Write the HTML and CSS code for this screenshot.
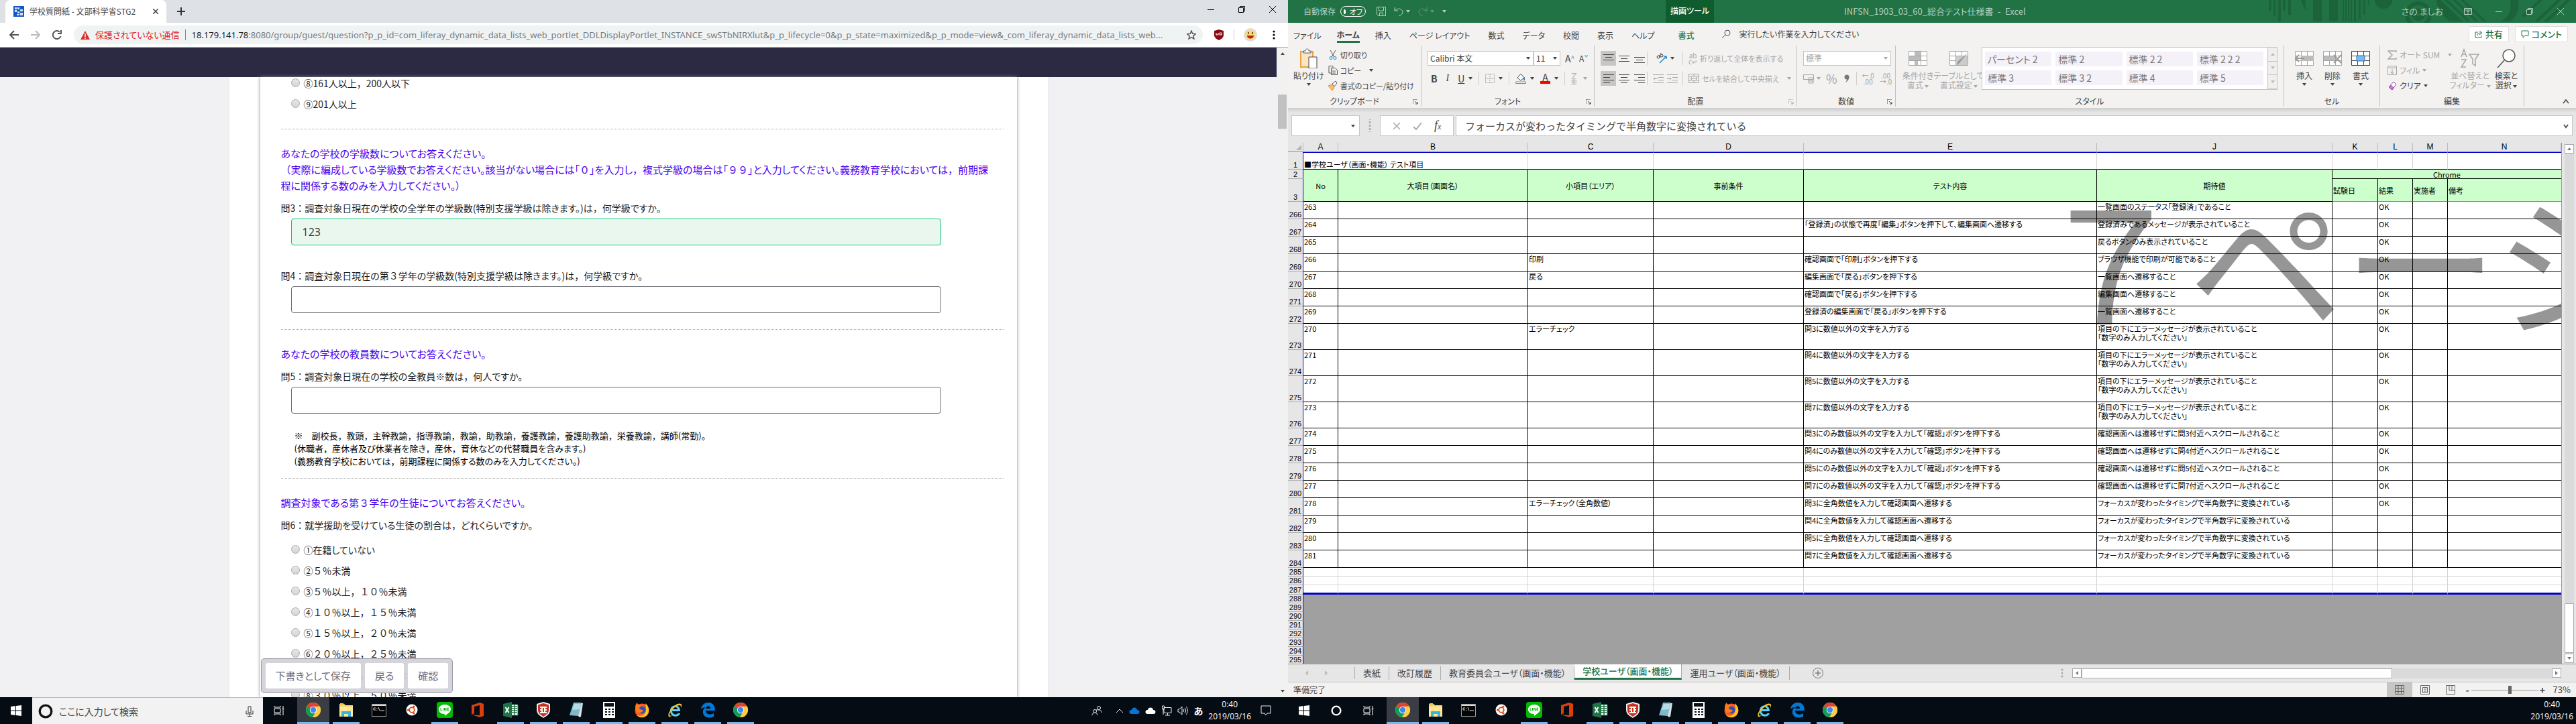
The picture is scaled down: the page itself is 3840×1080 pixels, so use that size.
FILE: index.html
```html
<!DOCTYPE html>
<html lang="ja">
<head>
<meta charset="utf-8">
<title>学校質問紙 - 文部科学省STG2</title>
<link rel="stylesheet" href="styles.css">
</head>
<body>
<svg class="defs" aria-hidden="true">
  <symbol id="i-chrome" viewBox="0 0 24 24"><circle cx="12" cy="12" r="11" fill="#fbc116"/><path d="M12 12L2.5 6.5A11 11 0 0 1 21.5 6.5L12 7z" fill="#db4437"/><path d="M2.5 6.5A11 11 0 0 0 11 23L16 14.5 12 12z" fill="#0f9d58"/><path d="M11 23A11 11 0 0 0 21.8 7H12l4.3 7.5z" fill="#ffcd40"/><circle cx="12" cy="12" r="5.2" fill="#f4f4f4"/><circle cx="12" cy="12" r="4.2" fill="#4285f4"/></symbol>
  <symbol id="i-folder" viewBox="0 0 24 24"><path d="M2 3h7l2 2h11v17H2z" fill="#f5d36b"/><path d="M2 7h20v15H2z" fill="#ffe794"/><path d="M5 22v-8h14v8h-4v-4H9v4z" fill="#3ab1e0"/><path d="M3 2h5v2H3z" fill="#e9b84a"/></symbol>
  <symbol id="i-cmd" viewBox="0 0 24 24"><path d="M1 3h22v19H1z" fill="#9a9a9a"/><path d="M2 6h20v15H2z" fill="#050505"/><path d="M2 4h20v2H2z" fill="#d8d8d8"/><path d="M4 9h3M4 9v3h3M9 9v1M9 12v1M11 8l2 5M14 13h6" stroke="#ddd" fill="none"/></symbol>
  <symbol id="i-ubuntu" viewBox="0 0 24 24"><circle cx="12" cy="12" r="8.5" fill="#fff"/><circle cx="12" cy="12" r="3.8" fill="none" stroke="#dd4814" stroke-width="1.8"/><circle cx="6.5" cy="12" r="1.6" fill="#dd4814"/><circle cx="15" cy="7" r="1.6" fill="#dd4814"/><circle cx="15" cy="17" r="1.6" fill="#dd4814"/></symbol>
  <symbol id="i-line" viewBox="0 0 24 24"><rect width="24" height="24" rx="4" fill="#00b900"/><path d="M12 4c5 0 9 3 9 7 0 5-6 7-9 10 0-2 0-3-1-3-5 0-8-3-8-7s4-7 9-7z" fill="#fff"/><path d="M6 9v4h2M9.500 9v4M11.500 13V9l2.500 4V9M18 9h-2v4h2M16 11h2" fill="none" stroke="#00b900"/></symbol>
  <symbol id="i-office" viewBox="0 0 24 24"><path d="M3 5l12-4 6 2v18l-6 2-12-4 12 1V5L7 7v10l-4 2z" fill="#dc3e0e"/></symbol>
  <symbol id="i-excel" viewBox="0 0 24 24"><path d="M13 4h10v16H13z" fill="#fff" stroke="#217346"/><path d="M14 7h8M14 10h8M14 13h8M14 16h8M18 4v16" stroke="#217346" stroke-width="1.500"/><path d="M1 3l13-3v24L1 21z" fill="#217346"/><path d="M4.500 8l5 8M9.500 8l-5 8" stroke="#fff" stroke-width="2"/></symbol>
  <symbol id="i-shield" viewBox="0 0 24 24"><path d="M12 0l10 3v9c0 6-5 9-10 12C7 21 2 18 2 12V3z" fill="#eee"/><path d="M12 2l8 2.500V12c0 5-4 7.500-8 10-4-2.500-8-5-8-10V4.500z" fill="#c8321e"/><path d="M7 8h10M7 12h10M7 16h10M10 7v10M14 7v10" stroke="#fff" stroke-width="2"/><path d="M11 10.500h2v3h-2z" fill="#c8321e"/></symbol>
  <symbol id="i-note" viewBox="0 0 24 24"><path d="M8 2h14l-3 20-3 1z" fill="#d8e0e2"/><path d="M8 1h12l-5 20-13-1z" fill="#7fb9c9"/><path d="M9 3h10l-2 8-11 1z" fill="#b4dce6"/></symbol>
  <symbol id="i-calc" viewBox="0 0 24 24"><path d="M3 0h18v24H3z" fill="#fff"/><path d="M5 2h14v5H5z" fill="#0a0d14"/><path d="M6 11h3M11 11h3M16 11h3M6 15h3M11 15h3M16 15h3M6 19h3M11 19h3M16 19h3" stroke="#0a0d14" stroke-width="2"/></symbol>
  <symbol id="i-firefox" viewBox="0 0 24 24"><circle cx="12" cy="13" r="10.500" fill="#ff5a1f"/><path d="M17 2c6 5 7 13 2 18-5 4-12 3-15 0 6 2 11 0 13-4s1-9 0-14z" fill="#ffc425"/><circle cx="12" cy="12" r="5.500" fill="#2b50b8"/><path d="M2 8c0-3 1-5 3-7 0 3 3 3 6 5-2 1-4 3-2 5 2 0 3 2 5 1-1 4-5 5-8 4-2-2-4-4-4-8z" fill="#ff7a1a"/></symbol>
  <symbol id="i-ie" viewBox="0 0 24 24"><path d="M20 14H8c0 5 7 6 8.500 3h3.500c-2 7-15 7-15-4 0-10 15-11 15 1zM8 11h8c0-4-7-4-8 0z" fill="#5fd0f5"/><path d="M3 22C-1 17 14-1 21 3c2 1 1 4 0 6 0-3 0-4-2-4C13 5 5 14 4 19c0 2 2 2 4 1-2 2-4 3-5 2z" fill="#f2c12e"/></symbol>
  <symbol id="i-edge" viewBox="0 0 24 24"><path d="M2 11C3 4 8 1 13 1c6 0 10 4 10 12H9c0 6 7 7 12 4v5C12 26 4 22 5 14c0-3 2-5 4-6-5 0-7 3-7 3zM9 10h7c0-5-6-5-7 0z" fill="#0078d7"/></symbol>
  <symbol id="i-win" viewBox="0 0 16 16"><path d="M0 2l7-1v6.500H0zM8 1l8-1v7.500H8zM0 8.500h7V15l-7-1zM8 8.500h8V16l-8-1z" fill="#fff"/></symbol>
  <symbol id="i-ring" viewBox="0 0 20 20"><circle cx="10" cy="10" r="8" fill="none" stroke="currentColor" stroke-width="3"/></symbol>
  <symbol id="i-task" viewBox="0 0 16 16"><path d="M1 1v2h9V1M1 15v-2h9v2M1 5h9v6H1zM14 1v3M14 7v8M13 5h2v1h-2z" fill="none" stroke="#fff"/></symbol>
  <symbol id="i-car" viewBox="0 0 6 4"><path d="M0 0h6L3 4z" fill="currentColor"/></symbol>
  <symbol id="i-launch" viewBox="0 0 8 8"><path d="M0 7V0h7M3 3l4 4M7 4v3H4" fill="none" stroke="currentColor"/></symbol>
  <symbol id="i-min" viewBox="0 0 10 10"><path d="M0 5.500h10" stroke="currentColor"/></symbol>
  <symbol id="i-restore" viewBox="0 0 10 10"><path d="M.5 2.500h7v7h-7zM2.500 2V.5h7v7H8" fill="none" stroke="currentColor"/></symbol>
  <symbol id="i-x" viewBox="0 0 10 10"><path d="M0 0l10 10M10 0L0 10" stroke="currentColor"/></symbol>
  <symbol id="i-grid" viewBox="0 0 28 22"><path d="M.5.5h27v21H.5z" fill="#fff" stroke="currentColor"/><path d="M9.500 0v22M18.500 0v22M0 7.500h28M0 14.500h28" stroke="currentColor"/></symbol>
  <symbol id="i-al" viewBox="0 0 16 14"><path d="M0 1.500h16M0 5.500h10M0 9.500h16M0 13.500h10" stroke="currentColor"/></symbol>
  <symbol id="i-ac" viewBox="0 0 16 14"><path d="M0 1.500h16M3 5.500h10M0 9.500h16M3 13.500h10" stroke="currentColor"/></symbol>
  <symbol id="i-ar" viewBox="0 0 16 14"><path d="M0 1.500h16M6 5.500h10M0 9.500h16M6 13.500h10" stroke="currentColor"/></symbol>
  <symbol id="i-vt" viewBox="0 0 16 14"><path d="M0 1.500h16M3 5.500h10M0 9.500h16" stroke="currentColor"/></symbol>
  <symbol id="i-vm" viewBox="0 0 16 14"><path d="M0 3.500h16M3 7.500h10M0 11.500h16" stroke="currentColor"/></symbol>
  <symbol id="i-vb" viewBox="0 0 16 14"><path d="M0 5.500h16M3 9.500h10M0 13.500h16" stroke="currentColor"/></symbol>
  <symbol id="i-ind" viewBox="0 0 16 14"><path d="M0 1.500h16M8 5.500h8M8 9.500h8M0 13.500h16M1 7.500h6M3 5.500l-2 2 2 2" fill="none" stroke="currentColor"/></symbol>
  <symbol id="i-inr" viewBox="0 0 16 14"><path d="M0 1.500h16M8 5.500h8M8 9.500h8M0 13.500h16M0 7.500h6M4 5.500l2 2-2 2" fill="none" stroke="currentColor"/></symbol>
</svg>

<div class="desktop">
<section class="screen">
  <div class="tabstrip">
    <div class="tab">
      <svg class="s16" viewBox="0 0 16 16"><path fill="#1357c4" d="M0 0h16v16H0z"/><path d="M2 2h3v3H2zM6 2h3v3H6zM2 6h3v3H2zM6 8h3v3H6zM10 5h4v3h-4zM10 10h4v4h-4zM5 12h4v2H5z" fill="#cfe0fb"/></svg>
      <span class="tab-title">学校質問紙 - 文部科学省STG2</span>
      <button class="plain" aria-label="タブを閉じる"><svg class="s8" viewBox="0 0 8 8"><path d="M0 0l8 8M8 0L0 8" stroke="#444" stroke-width="1.500"/></svg></button>
    </div>
    <button class="plain newtab" aria-label="新しいタブ"><svg class="s12" viewBox="0 0 12 12"><path d="M6 0v12M0 6h12" stroke="#333" stroke-width="2"/></svg></button>
    <div class="winbtns dark">
      <button class="plain" aria-label="最小化"><svg class="s10"><use href="#i-min"/></svg></button>
      <button class="plain" aria-label="元に戻す"><svg class="s10"><use href="#i-restore"/></svg></button>
      <button class="plain" aria-label="閉じる"><svg class="s10"><use href="#i-x"/></svg></button>
    </div>
  </div>
  <div class="toolbar">
    <button class="plain" aria-label="戻る"><svg class="s14" viewBox="0 0 14 14"><path d="M14 7H1M7 1L1 7l6 6" fill="none" stroke="#555" stroke-width="2"/></svg></button>
    <button class="plain" aria-label="進む"><svg class="s14" viewBox="0 0 14 14"><path d="M0 7h13M7 1l6 6-6 6" fill="none" stroke="#bbb" stroke-width="2"/></svg></button>
    <button class="plain" aria-label="再読み込み"><svg class="s14" viewBox="0 0 14 14"><path d="M12.500 9A6 6 0 1 1 11 2.800M13 0v5H8" fill="none" stroke="#555" stroke-width="2"/></svg></button>
    <div class="omnibox">
      <svg class="s14" viewBox="0 0 14 14"><path d="M7 1l7 13H0z" fill="#d93025"/><path d="M7 5v5M7 11v2" stroke="#fff" stroke-width="1.500"/></svg>
      <span class="insecure">保護されていない通信</span>
      <span class="url"><b>18.179.141.78</b>:8080/group/guest/question?p_p_id=com_liferay_dynamic_data_lists_web_portlet_DDLDisplayPortlet_INSTANCE_swSTbNIRXlut&amp;p_p_lifecycle=0&amp;p_p_state=maximized&amp;p_p_mode=view&amp;_com_liferay_dynamic_data_lists_web...</span>
      <button class="plain" aria-label="ブックマーク"><svg class="s14" viewBox="0 0 14 14"><path d="M7 1l1.800 4.200 4.500.4-3.400 3 1 4.400L7 10.700 3.100 13l1-4.400-3.400-3 4.500-.4z" fill="none" stroke="#555" stroke-width="1.500"/></svg></button>
    </div>
    <svg class="s16" viewBox="0 0 16 16"><path d="M8 0l7 2v6c0 4-3 6-7 8-4-2-7-4-7-8V2z" fill="#8c0a12"/><path d="M4 5v3h3V5M9 5h3v3H9z" fill="none" stroke="#fff"/></svg>
    <span class="vline"></span>
    <svg class="s20" viewBox="0 0 20 20"><circle cx="10" cy="10" r="10" fill="#ddd"/><circle cx="10" cy="10" r="7" fill="#fbd971"/><path d="M5 11h10c0 6-10 6-10 0z" fill="#c0231c"/><path d="M7 6v3M13 6v3" stroke="#5b3b12" stroke-width="1.500"/></svg>
    <button class="plain" aria-label="メニュー"><svg class="s14" viewBox="0 0 14 14"><circle cx="7" cy="2" r="1.600"/><circle cx="7" cy="7" r="1.600"/><circle cx="7" cy="12" r="1.600"/></svg></button>
  </div>

  <div class="browser">
    <div class="page">
      <header class="site-head"></header>
      <main class="column">
        <form class="panel">
          <div class="options first">
            <label><input type="radio" name="q2"><span>⑧161人以上<span class="w">，</span>200人以下</span></label>
            <label><input type="radio" name="q2">⑨201人以上</label>
          </div>
          <section class="block">
            <h2>あなたの学校の学級数についてお答えください。<br><span class="w">（</span>実際に編成している学級数でお答えください。該当がない場合には「<span class="w">０</span>」を入力し<span class="w">，</span>複式学級の場合は「<span class="w">９９</span>」と入力してください。義務教育学校においては<span class="w">，</span>前期課<br>程に関係する数のみを入力してください。）</h2>
            <label class="q" for="q3">問3<span class="w">：</span>調査対象日現在の学校の全学年の学級数(特別支援学級は除きます。)は<span class="w">，</span>何学級ですか。</label>
            <input class="field ok" id="q3" type="text" value="123">
            <label class="q next" for="q4">問4<span class="w">：</span>調査対象日現在の第<span class="w">３</span>学年の学級数(特別支援学級は除きます。)は<span class="w">，</span>何学級ですか。</label>
            <input class="field" id="q4" type="text">
          </section>
          <section class="block">
            <h2>あなたの学校の教員数についてお答えください。</h2>
            <label class="q" for="q5">問5<span class="w">：</span>調査対象日現在の学校の全教員※数は<span class="w">，</span>何人ですか。</label>
            <input class="field" id="q5" type="text">
            <p class="notes">※　副校長<span class="w">，</span>教頭<span class="w">，</span>主幹教諭<span class="w">，</span>指導教諭<span class="w">，</span>教諭<span class="w">，</span>助教諭<span class="w">，</span>養護教諭<span class="w">，</span>養護助教諭<span class="w">，</span>栄養教諭<span class="w">，</span>講師(常勤)。<br>(休職者<span class="w">，</span>産休者及び休業者を除き<span class="w">，</span>産休<span class="w">，</span>育休などの代替職員を含みます。)<br>(義務教育学校においては<span class="w">，</span>前期課程に関係する数のみを入力してください。)</p>
          </section>
          <section class="block">
            <h2>調査対象である第<span class="w">３</span>学年の生徒についてお答えください。</h2>
            <p class="q">問6<span class="w">：</span>就学援助を受けている生徒の割合は<span class="w">，</span>どれくらいですか。</p>
            <div class="options">
              <label><input type="radio" name="q6">①在籍していない</label>
              <label class="w"><input type="radio" name="q6">②５％未満</label>
              <label class="w"><input type="radio" name="q6">③５％以上，１０％未満</label>
              <label class="w"><input type="radio" name="q6">④１０％以上，１５％未満</label>
              <label class="w"><input type="radio" name="q6">⑤１５％以上，２０％未満</label>
              <label class="w"><input type="radio" name="q6">⑥２０％以上，２５％未満</label>
              <label class="w"><input type="radio" name="q6">⑦２５％以上，３０％未満</label>
              <label class="w"><input type="radio" name="q6">⑧３０％以上，５０％未満</label>
            </div>
          </section>
          <div class="actions">
            <button type="button">下書きとして保存</button><button type="button">戻る</button><button type="button">確認</button>
          </div>
        </form>
      </main>
    </div>
    <div class="scroll"><svg class="car"><use href="#i-car"/></svg><i></i><svg class="car"><use href="#i-car"/></svg></div>
  </div>

  <nav class="taskbar">
    <button class="t"><svg class="s16"><use href="#i-win"/></svg></button>
    <label class="search"><svg class="s22"><use href="#i-ring"/></svg><input type="text" placeholder="ここに入力して検索" aria-label="検索"><svg class="mic" viewBox="0 0 12 16"><path d="M4 1h4v9H4zM1 7v5h10V7M6 12v4M3 15.500h6" fill="none" stroke="#333"/></svg></label>
    <button class="t"><svg class="s16"><use href="#i-task"/></svg></button>
    <div class="apps">
      <button class="app on active"><svg><use href="#i-chrome"/></svg></button>
      <button class="app on"><svg><use href="#i-folder"/></svg></button>
      <button class="app"><svg><use href="#i-cmd"/></svg></button>
      <button class="app"><svg><use href="#i-ubuntu"/></svg></button>
      <button class="app on"><svg><use href="#i-line"/></svg></button>
      <button class="app"><svg><use href="#i-office"/></svg></button>
      <button class="app on"><svg><use href="#i-excel"/></svg></button>
      <button class="app on"><svg><use href="#i-shield"/></svg></button>
      <button class="app on"><svg><use href="#i-note"/></svg></button>
      <button class="app on"><svg><use href="#i-calc"/></svg></button>
      <button class="app on"><svg><use href="#i-firefox"/></svg></button>
      <button class="app on"><svg><use href="#i-ie"/></svg></button>
      <button class="app on"><svg><use href="#i-edge"/></svg></button>
      <button class="app on"><svg><use href="#i-chrome"/></svg></button>
    </div>
    <div class="tray">
      <svg class="s16 people" viewBox="0 0 16 16"><circle cx="11" cy="4" r="2.500"/><circle cx="5" cy="9" r="2.500"/><path d="M7 7c3 0 8-1 8 4M1 15c0-5 8-5 8 0"/></svg>
      <svg class="s12" viewBox="0 0 12 12"><path d="M1 9l5-5 5 5"/></svg>
      <svg class="s16" viewBox="0 0 16 16"><path d="M1 12c-2-5 3-5 3-5 1-5 8-4 8 0 5 0 4 6 1 6H3z" fill="#0a74d6" stroke="none"/></svg>
      <svg class="s16" viewBox="0 0 16 16"><path d="M1 12c-2-5 3-5 3-5 1-5 8-4 8 0 5 0 4 6 1 6H3z" fill="#fff" stroke="none"/></svg>
      <svg class="s16" viewBox="0 0 16 16"><path d="M4 3.500h11v8H4zM9.500 12v3M6 15h7M1.500 1v5h3V1zM3 6v8"/></svg>
      <svg class="s16" viewBox="0 0 16 16"><path d="M1 6h2l4-4v12l-4-4H1zM9 6c1 1 1 3 0 4M11 4c2 2 2 6 0 8M13 2c3 3 3 9 0 12"/></svg>
      <span class="ime">あ</span>
      <span class="clock">0:40<br>2019/03/16</span>
      <svg class="s16 bell" viewBox="0 0 16 16"><path d="M1 1h14v11h-5l-2 3-2-3H1z"/></svg>
    </div>
  </nav>
</section>

<section class="screen excel">
  <header class="titlebar">
    <svg class="deco" viewBox="0 0 460 34" preserveAspectRatio="xMaxYMid slice"><g fill="#1c623b"><path d="M2 0h4v16H2zM9 0h3v24H9zM16 0h4v32h-4zM23 0h4v16h-4zM31 0h4v22h-4zM50 0h7v15q-5-6-7-15zM68 0h13v32H68zM92 0h13v32H92zM112 0h2v32h-2zM116 0h2v32h-2zM120 0h2v32h-2zM124 0h2v32h-2zM129 0h3v32h-3zM136 0h3v29h-3zM143 0h3v22h-3zM150 0h2v8h-2z"/><circle cx="173" cy="0" r="13"/><path d="M252 0h6l34 32h-20q-20-16-20-32zM264 0h5l34 32h-5zM276 0h5l34 32h-5zM288 0h5l34 32h-5zM348 32q18-10 14-32h12q2 22-12 32zM380 22L405 0h5l-28 27zM398 32L432 0h6l-34 32zM412 32L446 0h6l-34 32z"/></g><g fill="none" stroke="#1c623b"><circle cx="225" cy="22" r="17" stroke-width="6"/><circle cx="225" cy="22" r="6" stroke-width="7"/></g></svg>
    <div class="qat">
      <span>自動保存</span><button class="toggle"><i></i>オフ</button>
      <button class="plain" aria-label="上書き保存"><svg class="s14" viewBox="0 0 14 14"><path d="M.5.500h13v13H3l-2.500-2zM3.500 1v5h7V1M4.500 13V9h5v4"/></svg></button>
      <button class="plain" aria-label="元に戻す"><svg class="s14" viewBox="0 0 14 14"><path d="M1 1v5h5M1 6c4-5 12-3 12 2 0 3-3 5-6 6"/></svg><svg class="car"><use href="#i-car"/></svg></button>
      <button class="plain dim" aria-label="やり直し"><svg class="s14" viewBox="0 0 14 14"><path d="M13 1v5H8M13 6C9 1 1 3 1 8c0 3 3 5 6 6"/></svg><svg class="car"><use href="#i-car"/></svg></button>
      <svg class="car"><use href="#i-car"/></svg>
    </div>
    <strong class="ctx">描画ツール</strong>
    <span class="book">INFSN_1903_03_60_総合テスト仕様書&ensp;-&ensp;Excel</span>
    <span class="user">さの ましお</span>
    <div class="winbtns">
      <button class="plain" aria-label="リボンの表示"><svg class="s12" viewBox="0 0 12 12"><path d="M.5 1.500h11v9H.5zM0 4h12M6 10V5M4 7l2-2 2 2"/></svg></button>
      <button class="plain" aria-label="最小化"><svg class="s10"><use href="#i-min"/></svg></button>
      <button class="plain" aria-label="元に戻す"><svg class="s10"><use href="#i-restore"/></svg></button>
      <button class="plain" aria-label="閉じる"><svg class="s10"><use href="#i-x"/></svg></button>
    </div>
  </header>

  <nav class="menu">
    <button>ファイル</button><button class="cur">ホーム</button><button>挿入</button><button class="wide">ページ レイアウト</button><button>数式</button><button>データ</button><button>校閲</button><button>表示</button><button>ヘルプ</button><button class="fmt">書式</button>
    <label class="tell"><svg class="s14" viewBox="0 0 14 14"><circle cx="9" cy="5" r="4" fill="none" stroke="#555"/><path d="M6 8l-5 5" stroke="#555"/></svg><input type="text" placeholder="実行したい作業を入力してください" aria-label="操作アシスト"></label>
    <button class="card"><svg class="s12" viewBox="0 0 12 12"><path d="M5 3H1v8h9V8M4 8c0-3 2-4 5-4M7 1l4 3-4 3"/></svg>共有</button>
    <button class="card cm"><svg class="s12" viewBox="0 0 12 12"><path d="M1 1h10v7H6l-3 3V8H1z"/></svg>コメント</button>
  </nav>

  <div class="ribbon">
    <section class="grp clip">
      <div class="body">
        <button class="big"><svg class="pic" viewBox="0 0 28 30"><path d="M2 5h18v23H2z" fill="#fbe6c4" stroke="#e8a33d" stroke-width="2"/><path d="M6 7V4h3c0-4 5-4 5 0h3v3z" fill="#fff" stroke="#555"/><path d="M14 13h12v17H14z" fill="#fff" stroke="#444"/></svg>貼り付け<svg class="car"><use href="#i-car"/></svg></button>
        <div class="stack">
          <button><svg class="s14" viewBox="0 0 14 14"><path d="M3 0l6 10M11 0L5 10" stroke="#555"/><circle cx="4" cy="11.500" r="2" fill="none" stroke="#1e88c7"/><circle cx="10" cy="11.500" r="2" fill="none" stroke="#1e88c7"/></svg>切り取り</button>
          <button><svg class="s14" viewBox="0 0 14 14"><path d="M4 11H1V.5h6V3M4.500 3.500h6l3 3v7h-9zM6 8h5M6 11h5" fill="none" stroke="#555"/></svg>コピー<svg class="car sp"><use href="#i-car"/></svg></button>
          <button><svg class="s14" viewBox="0 0 14 14"><path d="M0 7l5-2 4 5-3 4z" fill="#f8c169" stroke="#e08a2c"/><path d="M6 4l5-4 2 3-4 5z" fill="#fff" stroke="#555"/></svg>書式のコピー/貼り付け</button>
        </div>
      </div>
      <footer>クリップボード<svg class="s8"><use href="#i-launch"/></svg></footer>
    </section>

    <section class="grp font">
      <div class="body rows">
        <div class="line">
          <span class="pick f1"><select aria-label="フォント"><option>Calibri 本文</option></select><svg class="car"><use href="#i-car"/></svg></span><span class="pick f2"><select aria-label="サイズ"><option>11</option></select><svg class="car"><use href="#i-car"/></svg></span>
          <button class="gl">A<sup>^</sup></button><button class="gl sm">A<sup>ˇ</sup></button>
        </div>
        <div class="line fx">
          <button><b>B</b></button><button><i class="ser">I</i></button><button><u>U</u><svg class="car"><use href="#i-car"/></svg></button><span class="vsep"></span>
          <button><svg class="s14 off" viewBox="0 0 14 14"><path d="M.5.500h13v13H.5zM7 0v14M0 7h14" fill="none" stroke="currentColor" stroke-dasharray="2 1"/></svg><svg class="car"><use href="#i-car"/></svg></button><span class="vsep"></span>
          <button><svg class="s16" viewBox="0 0 16 16"><path d="M3 7l5-6 5 6-5 4z" fill="#fff" stroke="#444"/><path d="M13 6v5" stroke="#1e88c7" stroke-width="2"/><path d="M.5 13h15v2.500H.5z" fill="#fff" stroke="#888"/></svg><svg class="car"><use href="#i-car"/></svg></button>
          <button class="fc"><span>A</span><svg class="car"><use href="#i-car"/></svg></button><span class="vsep"></span>
          <button class="off ruby">ア<br>亜</button><svg class="car off"><use href="#i-car"/></svg>
        </div>
      </div>
      <footer>フォント<svg class="s8"><use href="#i-launch"/></svg></footer>
    </section>

    <section class="grp align">
      <div class="body rows">
        <div class="line">
          <button class="sq sel"><svg class="ln"><use href="#i-vt"/></svg></button><button class="sq"><svg class="ln"><use href="#i-vm"/></svg></button><button class="sq"><svg class="ln"><use href="#i-vb"/></svg></button><span class="vsep"></span>
          <button class="or"><svg class="s16" viewBox="0 0 16 16"><path d="M5 15L15 5M15 5h-4M15 5v4" fill="none" stroke="#1e88c7" stroke-width="1.500"/><circle cx="3" cy="6" r="2" fill="none" stroke="#444"/><circle cx="8" cy="4" r="2" fill="none" stroke="#444"/><path d="M4 3l2 4M6 0l2 3" stroke="#444"/></svg><svg class="car"><use href="#i-car"/></svg></button><span class="vsep"></span>
          <button class="off lab"><span class="tiny">ab<br>c↵</span>折り返して全体を表示する</button>
        </div>
        <div class="line">
          <button class="sq sel"><svg class="ln"><use href="#i-al"/></svg></button><button class="sq"><svg class="ln"><use href="#i-ac"/></svg></button><button class="sq"><svg class="ln"><use href="#i-ar"/></svg></button><span class="vsep"></span>
          <button class="or off"><svg class="ln"><use href="#i-ind"/></svg><svg class="ln"><use href="#i-inr"/></svg></button><span class="vsep"></span>
          <button class="off lab"><svg class="ln" viewBox="0 0 16 14"><path d="M.5.500h15v13H.5zM0 4h16M0 10h16M8 0v4M8 10v4M3 7h10M5 5L3 7l2 2M11 5l2 2-2 2" fill="none" stroke="currentColor"/></svg>セルを結合して中央揃え<svg class="car sp"><use href="#i-car"/></svg></button>
        </div>
      </div>
      <footer>配置<svg class="s8 off"><use href="#i-launch"/></svg></footer>
    </section>

    <section class="grp num off">
      <div class="body rows">
        <div class="line"><span class="pick f3"><select aria-label="表示形式"><option>標準</option></select><svg class="car"><use href="#i-car"/></svg></span></div>
        <div class="line nf">
          <button><svg class="s16" viewBox="0 0 16 16"><path d="M.5 2.500h15v7H.5zM8 7h7v8H8zM8 10h7M8 12h7" fill="#f3f2f1" stroke="currentColor"/></svg><svg class="car"><use href="#i-car"/></svg></button><button class="big1">%</button><button class="big1" aria-label="桁区切り"><svg class="s12" viewBox="0 0 12 12"><circle cx="6" cy="4" r="3.500" fill="#777"/><path d="M9 3q1 6-5 9 3-4 2-7z" fill="#777"/></svg></button><span class="vsep"></span><button class="tiny">←.0<br>.00</button><button class="tiny">.00<br>→.0</button>
        </div>
      </div>
      <footer>数値<svg class="s8"><use href="#i-launch"/></svg></footer>
    </section>

    <section class="grp styles">
      <div class="body">
        <button class="big off c1"><svg class="gr" viewBox="0 0 28 22"><use href="#i-grid"/><path d="M9 1h10v6H9zM1 8h17v6H1zM9 15h5v6H9z" fill="#bbb"/></svg><span>条件付き<br>書式 <svg class="car"><use href="#i-car"/></svg></span></button>
        <button class="big off c2"><svg class="gr" viewBox="0 0 28 22"><use href="#i-grid"/><path d="M10 8h17v13H10z" fill="#ccc"/><path d="M27 3L15 18l-4 4 1-6z" fill="#999"/></svg><span>テーブルとして<br>書式設定 <svg class="car"><use href="#i-car"/></svg></span></button>
        <div class="gallery">
          <button>パーセント 2</button><button>標準 2</button><button>標準 2 2</button><button>標準 2 2 2</button>
          <button>標準 3</button><button>標準 3 2</button><button>標準 4</button><button>標準 5</button>
          <div class="gscroll"><span><svg class="car up"><use href="#i-car"/></svg></span><span><svg class="car"><use href="#i-car"/></svg></span><span><svg class="car"><use href="#i-car"/></svg></span></div>
        </div>
      </div>
      <footer>スタイル</footer>
    </section>

    <section class="grp cells">
      <div class="body">
        <button class="big"><svg class="gr off" viewBox="0 0 28 22"><use href="#i-grid"/><path d="M9 7h19v8H9z" fill="#bbb"/><path d="M14 11H1M6 6l-5 5 5 5" fill="none" stroke="#999" stroke-width="2"/></svg>挿入<svg class="car"><use href="#i-car"/></svg></button>
        <button class="big"><svg class="gr off" viewBox="0 0 28 22"><use href="#i-grid"/><path d="M1 8h17v6H1z" fill="#bbb"/><path d="M16 6l11 12M27 6L16 18" stroke="#999" stroke-width="2"/></svg>削除<svg class="car"><use href="#i-car"/></svg></button>
        <button class="big"><svg class="gr" viewBox="0 0 28 22"><use href="#i-grid"/><path d="M8 7h12v8H8z" fill="#7fb8ea" stroke="#1e6fb8"/></svg>書式<svg class="car"><use href="#i-car"/></svg></button>
      </div>
      <footer>セル</footer>
    </section>

    <section class="grp edit">
      <div class="body">
        <div class="stack">
          <button class="off"><svg class="s14" viewBox="0 0 14 14"><path d="M13 3V1H1l6 6-6 6h12v-2" fill="none" stroke="currentColor" stroke-width="1.500"/></svg>オート SUM<svg class="car sp"><use href="#i-car"/></svg></button>
          <button class="off"><svg class="s14" viewBox="0 0 14 14"><path d="M.5.500h13v13H.5zM0 3h14M7 5v7M4 9l3 3 3-3" fill="none" stroke="currentColor"/></svg>フィル<svg class="car"><use href="#i-car"/></svg></button>
          <button><svg class="s14" viewBox="0 0 14 14"><path d="M9 1l4 4-6 8-5-4z" fill="#fff" stroke="#a33bb0"/><path d="M5 6l4 4-2 3-5-4z" fill="#c77fd0" stroke="#a33bb0"/></svg>クリア<svg class="car"><use href="#i-car"/></svg></button>
        </div>
        <button class="big off c3"><svg class="pic" viewBox="0 0 28 30"><path d="M1 13L5 2l4 11M2 9h6M1 17h7l-7 11h7M13 9h14l-5 7v10l-4-3v-7z" fill="none" stroke="currentColor" stroke-width="1.500"/></svg><span>並べ替えと<br>フィルター <svg class="car"><use href="#i-car"/></svg></span></button>
        <button class="big c4"><svg class="pic" viewBox="0 0 28 30"><circle cx="18" cy="11" r="9" fill="#fff" stroke="#555" stroke-width="1.500"/><path d="M11 18L1 29" stroke="#555" stroke-width="1.500"/></svg><span>検索と<br>選択 <svg class="car"><use href="#i-car"/></svg></span></button>
      </div>
      <footer>編集</footer>
    </section>
    <button class="plain fold" aria-label="リボンを折りたたむ"><svg class="s10" viewBox="0 0 10 10"><path d="M1 8l4-5 4 5" fill="none" stroke="#444" stroke-width="1.500"/></svg></button>
  </div>

  <div class="fbar">
    <div class="namebox"><svg class="car"><use href="#i-car"/></svg></div>
    <span class="dots"></span>
    <div class="fxbox"><svg class="s12" viewBox="0 0 12 12"><path d="M1 1l10 10M11 1L1 11" stroke="#aaa" stroke-width="1.500"/></svg><svg class="s12" viewBox="0 0 12 12"><path d="M0 7l4 4L12 1" fill="none" stroke="#aaa" stroke-width="2"/></svg><i class="ser">f<small>x</small></i></div>
    <div class="finput"><input type="text" aria-label="数式バー" value="フォーカスが変わったタイミングで半角数字に変換されている"><svg class="s8" viewBox="0 0 8 8"><path d="M1 2l3 4 3-4" fill="none" stroke="#555" stroke-width="2"/></svg></div>
  </div>

  <div class="sheet">
    <div class="cellsarea">
      <table>
        <colgroup><col class="w-h"><col class="w-a"><col class="w-b"><col class="w-c"><col class="w-d"><col class="w-e"><col class="w-j"><col class="w-k"><col class="w-l"><col class="w-l"><col></colgroup>
        <thead>
          <tr class="letters"><th><svg class="s8" viewBox="0 0 8 8"><path d="M8 0v8H0z" fill="#b5b5b5"/></svg></th><th>A</th><th>B</th><th>C</th><th>D</th><th>E</th><th>J</th><th>K</th><th>L</th><th>M</th><th>N</th></tr>
        </thead>
        <tbody>
          <tr class="r26 title"><th>1</th><td colspan="2">■学校ユーザ（画面・機能） テスト項目</td><td></td><td></td><td></td><td></td><td></td><td></td><td></td><td></td></tr>
          <tr class="r14 green"><th>2</th><td rowspan="2">No</td><td rowspan="2">大項目（画面名）</td><td rowspan="2">小項目（エリア）</td><td rowspan="2">事前条件</td><td rowspan="2">テスト内容</td><td rowspan="2">期待値</td><td colspan="4">Chrome</td></tr>
          <tr class="r34 green sub"><th>3</th><td>試験日</td><td>結果</td><td>実施者</td><td>備考</td></tr>
          <tr class="r26"><th>266</th><td>263</td><td></td><td></td><td></td><td></td><td>一覧画面のステータス「登録済」であること</td><td></td><td>OK</td><td></td><td></td></tr>
          <tr class="r26"><th>267</th><td>264</td><td></td><td></td><td></td><td>「登録済」の状態で再度「編集」ボタンを押下して、編集画面へ遷移する</td><td>登録済みであるメッセージが表示されていること</td><td></td><td>OK</td><td></td><td></td></tr>
          <tr class="r26"><th>268</th><td>265</td><td></td><td></td><td></td><td></td><td>戻るボタンのみ表示されていること</td><td></td><td>OK</td><td></td><td></td></tr>
          <tr class="r26"><th>269</th><td>266</td><td></td><td>印刷</td><td></td><td>確認画面で「印刷」ボタンを押下する</td><td>ブラウザ機能で印刷が可能であること</td><td></td><td>OK</td><td></td><td></td></tr>
          <tr class="r26"><th>270</th><td>267</td><td></td><td>戻る</td><td></td><td>編集画面で「戻る」ボタンを押下する</td><td>一覧画面へ遷移すること</td><td></td><td>OK</td><td></td><td></td></tr>
          <tr class="r26"><th>271</th><td>268</td><td></td><td></td><td></td><td>確認画面で「戻る」ボタンを押下する</td><td>編集画面へ遷移すること</td><td></td><td>OK</td><td></td><td></td></tr>
          <tr class="r26"><th>272</th><td>269</td><td></td><td></td><td></td><td>登録済の編集画面で「戻る」ボタンを押下する</td><td>一覧画面へ遷移すること</td><td></td><td>OK</td><td></td><td></td></tr>
          <tr class="r39"><th>273</th><td>270</td><td></td><td>エラーチェック</td><td></td><td>問3に数値以外の文字を入力する</td><td>項目の下にエラーメッセージが表示されていること<br>「数字のみ入力してください」</td><td></td><td>OK</td><td></td><td></td></tr>
          <tr class="r39"><th>274</th><td>271</td><td></td><td></td><td></td><td>問4に数値以外の文字を入力する</td><td>項目の下にエラーメッセージが表示されていること<br>「数字のみ入力してください」</td><td></td><td>OK</td><td></td><td></td></tr>
          <tr class="r39"><th>275</th><td>272</td><td></td><td></td><td></td><td>問5に数値以外の文字を入力する</td><td>項目の下にエラーメッセージが表示されていること<br>「数字のみ入力してください」</td><td></td><td>OK</td><td></td><td></td></tr>
          <tr class="r39"><th>276</th><td>273</td><td></td><td></td><td></td><td>問7に数値以外の文字を入力する</td><td>項目の下にエラーメッセージが表示されていること<br>「数字のみ入力してください」</td><td></td><td>OK</td><td></td><td></td></tr>
          <tr class="r26"><th>277</th><td>274</td><td></td><td></td><td></td><td>問3にのみ数値以外の文字を入力して「確認」ボタンを押下する</td><td>確認画面へは遷移せずに問3付近へスクロールされること</td><td></td><td>OK</td><td></td><td></td></tr>
          <tr class="r26"><th>278</th><td>275</td><td></td><td></td><td></td><td>問4にのみ数値以外の文字を入力して「確認」ボタンを押下する</td><td>確認画面へは遷移せずに問4付近へスクロールされること</td><td></td><td>OK</td><td></td><td></td></tr>
          <tr class="r26"><th>279</th><td>276</td><td></td><td></td><td></td><td>問5にのみ数値以外の文字を入力して「確認」ボタンを押下する</td><td>確認画面へは遷移せずに問5付近へスクロールされること</td><td></td><td>OK</td><td></td><td></td></tr>
          <tr class="r26"><th>280</th><td>277</td><td></td><td></td><td></td><td>問7にのみ数値以外の文字を入力して「確認」ボタンを押下する</td><td>確認画面へは遷移せずに問7付近へスクロールされること</td><td></td><td>OK</td><td></td><td></td></tr>
          <tr class="r26"><th>281</th><td>278</td><td></td><td>エラーチェック（全角数値）</td><td></td><td>問3に全角数値を入力して確認画面へ遷移する</td><td>フォーカスが変わったタイミングで半角数字に変換されている</td><td></td><td>OK</td><td></td><td></td></tr>
          <tr class="r26"><th>282</th><td>279</td><td></td><td></td><td></td><td>問4に全角数値を入力して確認画面へ遷移する</td><td>フォーカスが変わったタイミングで半角数字に変換されている</td><td></td><td></td><td></td><td></td></tr>
          <tr class="r26"><th>283</th><td>280</td><td></td><td></td><td></td><td>問5に全角数値を入力して確認画面へ遷移する</td><td>フォーカスが変わったタイミングで半角数字に変換されている</td><td></td><td></td><td></td><td></td></tr>
          <tr class="r26"><th>284</th><td>281</td><td></td><td></td><td></td><td>問7に全角数値を入力して確認画面へ遷移する</td><td>フォーカスが変わったタイミングで半角数字に変換されている</td><td></td><td></td><td></td><td></td></tr>
          <tr class="r13 blank"><th>285</th><td></td><td></td><td></td><td></td><td></td><td></td><td></td><td></td><td></td><td></td></tr>
          <tr class="r13 blank"><th>286</th><td></td><td></td><td></td><td></td><td></td><td></td><td></td><td></td><td></td><td></td></tr>
          <tr class="r14 blank last"><th>287</th><td></td><td></td><td></td><td></td><td></td><td></td><td></td><td></td><td></td><td></td></tr>
          <tr class="r13"><th>288</th><td class="void" colspan="10" rowspan="8"></td></tr>
          <tr class="r13"><th>289</th></tr><tr class="r13"><th>290</th></tr><tr class="r13"><th>291</th></tr><tr class="r13"><th>292</th></tr><tr class="r13"><th>293</th></tr><tr class="r13"><th>294</th></tr><tr class="r13"><th>295</th></tr>
        </tbody>
      </table>
      <div class="mark">７ページ</div>
    </div>
    <div class="vscroll"><span class="sb"><svg class="car up"><use href="#i-car"/></svg></span><div class="track"><i></i></div><span class="sb"><svg class="car"><use href="#i-car"/></svg></span></div>
  </div>

  <div class="tabs">
    <div class="arrows"><svg class="s8" viewBox="0 0 8 8"><path d="M6 0v8L2 4z" fill="#bbb"/></svg><svg class="s8" viewBox="0 0 8 8"><path d="M2 0v8l4-4z" fill="#bbb"/></svg></div>
    <button>表紙</button><button>改訂履歴</button><button>教育委員会ユーザ（画面・機能）</button><button class="cur">学校ユーザ（画面・機能）</button><button>運用ユーザ（画面・機能）</button>
    <button class="plain add" aria-label="新しいシート"><svg class="s16" viewBox="0 0 16 16"><circle cx="8" cy="8" r="7.500" fill="none" stroke="#777"/><path d="M8 4v8M4 8h8" stroke="#555"/></svg></button>
    <span class="dots"></span>
    <div class="hscroll"><span class="sb"><svg class="car lf"><use href="#i-car"/></svg></span><div class="track"><i></i></div><span class="sb"><svg class="car rt"><use href="#i-car"/></svg></span></div>
  </div>

  <div class="status">
    <span class="ready">準備完了</span>
    <button class="view sel"><svg class="s14" viewBox="0 0 14 14"><path d="M.5.500h13v13H.5zM5 0v14M9.500 0v14M0 5h14M0 9.500h14"/></svg></button>
    <button class="view"><svg class="s14" viewBox="0 0 14 14"><path d="M.5.500h13v13H.5zM3.500 3.500h7v8h-7zM5 6h4M5 9h4"/></svg></button>
    <button class="view"><svg class="s14" viewBox="0 0 14 14"><path d="M.5.500h13v13H.5zM5 0v8h9M9 0v8"/></svg></button>
    <b class="pm">-</b><input type="range" aria-label="ズーム" min="10" max="200" value="120"><b class="pm">+</b><span class="pct">73%</span>
  </div>

  <nav class="taskbar">
    <button class="t"><svg class="s16"><use href="#i-win"/></svg></button>
    <button class="t"><svg class="s16"><use href="#i-ring"/></svg></button>
    <button class="t"><svg class="s16"><use href="#i-task"/></svg></button>
    <div class="apps">
      <button class="app on active"><svg><use href="#i-chrome"/></svg></button>
      <button class="app on"><svg><use href="#i-folder"/></svg></button>
      <button class="app"><svg><use href="#i-cmd"/></svg></button>
      <button class="app"><svg><use href="#i-ubuntu"/></svg></button>
      <button class="app on"><svg><use href="#i-line"/></svg></button>
      <button class="app"><svg><use href="#i-office"/></svg></button>
      <button class="app on"><svg><use href="#i-excel"/></svg></button>
      <button class="app on"><svg><use href="#i-shield"/></svg></button>
      <button class="app on"><svg><use href="#i-note"/></svg></button>
      <button class="app on"><svg><use href="#i-calc"/></svg></button>
      <button class="app on"><svg><use href="#i-firefox"/></svg></button>
      <button class="app on"><svg><use href="#i-ie"/></svg></button>
      <button class="app on"><svg><use href="#i-edge"/></svg></button>
      <button class="app on"><svg><use href="#i-chrome"/></svg></button>
    </div>
    <div class="tray"><span class="clock">0:40<br>2019/03/16</span></div>
  </nav>
</section>
</div>
</body>
</html>
```
FILE: styles.css
```css
* { box-sizing: border-box; }
body { margin: 0; font-family: "Noto Sans CJK JP", sans-serif; font-size: 12px; line-height: 16px; color: #444; font-feature-settings: "palt"; }
button, input, select { font: inherit; font-feature-settings: inherit; color: inherit; margin: 0; padding: 0; border: 0; background: none; border-radius: 0; }
button { white-space: nowrap; }
h2, p { margin: 0; }
svg { display: block; flex: none; }
.defs { position: absolute; width: 0; height: 0; }
.s8 { width: 8px; height: 8px; }
.s10 { width: 10px; height: 10px; }
.s12 { width: 12px; height: 12px; }
.s14 { width: 14px; height: 14px; }
.s16 { width: 16px; height: 16px; }
.s20 { width: 20px; height: 20px; }
.s22 { width: 22px; height: 22px; }
.car { width: 6px; height: 4px; }
.car.up { transform: rotate(180deg); }
.car.lf { transform: rotate(90deg); }
.car.rt { transform: rotate(-90deg); }
.plain { display: flex; align-items: center; justify-content: center; gap: 4px; }
.off { color: #a6a6a6; }
.ser { font-family: "Liberation Serif", serif; }
/* full-width punctuation and digits */
.w { font-feature-settings: normal; }

.desktop { display: grid; grid-template-columns: 1fr 1fr; height: 100vh; }
.screen { display: flex; flex-direction: column; min-width: 0; min-height: 0; overflow: hidden; }

/* browser chrome */
.tabstrip { display: flex; align-items: center; height: 34px; padding-left: 8px; background: #dee1e6; }
.tab { display: flex; align-items: center; align-self: stretch; gap: 8px; width: 240px; padding: 0 12px; background: #fff; border-radius: 8px 8px 0 0; }
.tab-title { flex: 1; white-space: nowrap; }
.newtab { width: 44px; }
.winbtns { display: flex; margin-left: auto; align-items: center; }
.winbtns button { width: 46px; height: 28px; }
.winbtns.dark { color: #000; align-self: flex-start; }
.toolbar { display: flex; align-items: center; gap: 18px; height: 37px; padding: 0 14px; background: #fff; border-bottom: 1px solid #b0b0b0; }
.omnibox { display: flex; align-items: center; flex: 1; height: 28px; margin-right: -2px; padding: 0 10px; gap: 8px; border-radius: 14px; background: #f0f3f4; }
.insecure { padding-right: 9px; border-right: 1px solid #888; color: #e0201b; font-size: 13px; white-space: nowrap; }
.url { flex: 1; font-family: "Noto Sans", "Open Sans", sans-serif; font-size: 13px; color: #777c80; white-space: nowrap; overflow: hidden; }
.url b { font-weight: 400; color: #222; }
.vline { width: 1px; height: 16px; margin: 0 -4px; background: #ccc; }

.browser { display: flex; flex: 1; min-height: 0; }
.page { flex: 1; min-width: 0; overflow: hidden; background: #f1f1f4; display: flex; flex-direction: column; }
.site-head { flex: none; height: 44px; background: #2b2a42; }
.column { flex: 1; min-height: 0; width: 100%; max-width: 1222px; margin: 0 auto; padding: 0 46px; background: #fff; border: solid #e7e7ed; border-width: 0 1px; }
.panel { position: relative; height: 100%; overflow: hidden; padding: 0 20px 0 31px; box-shadow: 0 0 5px #888; color: #1c1c24; background: #fff; }
.block { display: flex; flex-direction: column; border-top: 1px dotted #aaa; padding-bottom: 24px; }
.block h2 { margin: 24px 0 11px; font-size: 15px; line-height: 24px; font-weight: 400; color: #4a00f0; white-space: nowrap; }
.q { font-size: 14px; line-height: 20px; margin-bottom: 6px; }
.q.next { margin-top: 35px; }
.field { height: 40px; margin: 0 93px 0 15px; padding: 0 16px; border: 1px solid #6b6b73; border-radius: 4px; font-size: 16px; font-family: "Open Sans", sans-serif; color: #333; }
.field.ok { border-color: #08c47c; background: #e9f7ee; }
.notes { margin: 23px 0 -8px 20px; font-size: 13px; line-height: 19px; color: #000; }
.options { display: flex; flex-direction: column; margin: 5px 0 0 15px; font-size: 14px; }
.options.first { margin: -7px 0 22px 15px; }
.options label { display: flex; align-items: center; gap: 6px; height: 31px; flex: none; }
.options input { appearance: none; width: 13px; height: 13px; border: 1px solid #aaa; border-radius: 50%; background: linear-gradient(#e8e8e8, #d4d4d4); }
.actions { position: absolute; left: 1px; bottom: 6px; display: flex; gap: 6px; padding: 6px; border: 1px solid #9d9caa; border-radius: 5px; background: #d2d1d8ee; }
.actions button { height: 38px; padding: 0 15px; border-radius: 3px; background: #fff; color: #6b6c7e; font-size: 15px; }
.scroll { display: flex; flex-direction: column; align-items: center; width: 17px; padding: 7px 2px; background: #f1f1f1; }
.scroll .car:first-child { transform: rotate(180deg); }
.scroll i { width: 13px; height: 51px; margin: 59px 0 auto; background: #c1c1c1; }

/* taskbar */
.taskbar { display: flex; flex: none; height: 40px; background: #060c14; color: #fff; }
.taskbar .t { display: grid; place-items: center; width: 48px; }
.search { display: flex; align-items: center; gap: 9px; width: 344px; padding: 0 14px 0 9px; background: #f2f2f2; color: #111; border-top: 1px solid #bbb; }
.search input { flex: 1; min-width: 0; font-size: 14px; }
.search input::placeholder { color: #444; opacity: 1; }
.mic { width: 12px; height: 16px; }
.apps { display: flex; gap: 9px; padding-left: 7px; }
.app { display: grid; place-items: center; width: 40px; border-bottom: 3px solid transparent; }
.app svg { width: 24px; height: 24px; }
.app.on { border-color: #76b9ed; }
.app.active { width: 48px; margin: 0 -4px; background: #3a3d43; }
.tray { display: flex; align-items: center; gap: 8px; margin-left: auto; padding-right: 4px; }
.tray svg { fill: none; stroke: #eee; }
.people { margin-right: 12px; }
.bell { margin: 0 21px 0 6px; }
.ime { font-size: 14px; font-weight: 700; }
.clock { font-size: 12px; line-height: 18px; text-align: center; font-family: "Open Sans", sans-serif; }

/* excel */
.titlebar { position: relative; display: flex; flex: none; align-items: center; height: 34px; padding-left: 23px; background: #217346; color: #b3cfbf; }
.deco { position: absolute; right: 0; top: 0; width: 460px; height: 34px; }
.titlebar > :not(.deco) { position: relative; }
.titlebar svg:not(.car):not(.deco) { fill: none; stroke: currentColor; }
.qat { display: flex; align-items: center; gap: 12px; width: 540px; }
.qat .toggle { display: flex; align-items: center; gap: 6px; width: 38px; height: 16px; margin: 0 4px 0 -5px; padding: 0 4px; border: 1px solid #fff; border-radius: 8px; color: #fff; font-size: 11px; }
.toggle i { width: 7px; height: 7px; border-radius: 50%; background: #fff; }
.dim { opacity: .4; }
.ctx { align-self: stretch; width: 72px; text-align: center; line-height: 32px; background: #0f5c2e; color: #fff; font-weight: 500; }
.book { flex: 1; padding-left: 194px; font-size: 13px; white-space: pre; }
.user { font-size: 13px; }
.titlebar .winbtns { margin-left: 14px; }
.menu { display: flex; flex: none; align-items: center; height: 34px; gap: 27px; padding: 0 12px 0 8px; background: #f3f2f1; }
.menu > button:not(.card) { height: 26px; padding-top: 4px; }
.menu .cur { font-weight: 700; margin: 0 -4px; border-bottom: 3px solid #217346; }
.menu .fmt { margin-left: 8px; color: #217346; font-weight: 500; }
.tell { display: flex; align-items: center; gap: 12px; flex: 1; margin-left: 14px; }
.tell input { flex: 1; }
.tell input::placeholder { color: #444; opacity: 1; }
.menu .card { display: flex; align-items: center; gap: 4px; height: 24px; padding: 0 8px; background: #fff; border: 1px solid #e1dfdd; border-radius: 2px; color: #217346; font-size: 13px; font-weight: 500; }
.card svg { fill: none; stroke: currentColor; }
.card.cm { margin-left: -18px; }
.ribbon { display: flex; flex: none; height: 93px; padding-bottom: 2px; background: #f3f2f1; }
.grp { display: flex; flex-direction: column; border-right: 1px solid #c3c1bf; }
.grp .body { display: flex; flex: 1; padding-top: 4px; }
.grp footer { position: relative; height: 16px; text-align: center; color: #444; }
.grp footer svg { position: absolute; right: 4px; top: 5px; }
.grp button { display: flex; align-items: center; }
.clip { width: 199px; }
.font { width: 258px; }
.align { width: 302px; }
.num { width: 147px; }
.styles { width: 579px; }
.cells { width: 143px; }
.edit { width: 215px; }
.big { flex-direction: column; line-height: 14px; gap: 4px; }
.big span { text-align: center; }
.big span .car { display: inline-block; vertical-align: middle; }
.grp .big { align-self: flex-start; }
.pic { width: 28px; height: 30px; }
.gr { width: 28px; height: 22px; margin: 4px 0; }
.clip .body { padding-left: 8px; gap: 6px; }
.clip .stack { font-size: 11px; }
.stack { display: flex; flex-direction: column; justify-content: space-between; padding-bottom: 5px; }
.stack button { gap: 4px; height: 20px; }
.sp { margin-left: 8px; }
.rows { flex-direction: column; gap: 8px; padding: 8px 0 0 9px; }
.body.rows { padding-top: 8px; }
.line { display: flex; align-items: center; height: 22px; }
.pick { position: relative; display: flex; align-items: center; height: 22px; border: 1px solid #c6c4c2; background: #fff; }
.pick select { appearance: none; width: 100%; height: 100%; padding-left: 3px; line-height: 20px; }
.pick .car { position: absolute; right: 4px; pointer-events: none; }
.f1 { width: 158px; }
.f2 { width: 40px; }
.f3 { width: 131px; }
.gl { margin-left: 7px; font-size: 14px; }
.gl sup { font-size: 10px; line-height: 8px; color: #1e88c7; }
.gl.sm { font-size: 12px; }
.fx { gap: 9px; font-size: 14px; padding-left: 5px; }
.fx button { gap: 6px; }
.fx button:nth-child(2) { margin: 0 4px; }
.vsep { width: 1px; height: 20px; background: #d0cecc; }
.fc span { border-bottom: 4px solid #f00; line-height: 12px; padding: 0 3px; }
.fx .ruby { font-size: 9px; line-height: 9px; }
.sq { justify-content: center; width: 23px; height: 22px; }
.sel { background: #c8c6c4; }
.ln { width: 16px; height: 14px; }
.or { gap: 5px; width: 52px; justify-content: center; }
.lab { gap: 4px; padding-left: 8px; font-size: 11px; }
.tiny { font-size: 10px; line-height: 9px; }
.num .nf { gap: 8px; }
.nf button { gap: 4px; }
.big1 { font-size: 18px; }
.styles .body { padding-left: 6px; }
.c1 { width: 54px; }
.c2 { width: 68px; }
.gallery { display: grid; grid-template-columns: repeat(4, 1fr) 14px; grid-template-rows: 22px 22px; gap: 6px; width: 441px; height: 64px; margin-top: -2px; padding: 6px 0 0 4px; border: 1px solid #c6c4c2; background: #fff; }
.gallery button { padding-left: 4px; background: #f5f1f8; font-size: 14px; color: #777; }
.gscroll { grid-column: 5; grid-row: 1 / 3; display: grid; grid-template-rows: 1fr 1fr 1fr; height: 62px; margin-top: -6px; background: #f0efee; border-left: 1px solid #c6c4c2; color: #bbb; }
.gscroll span { display: grid; place-items: center; border-bottom: 1px solid #c6c4c2; }
.cells .body { padding: 4px 12px 0 14px; justify-content: space-between; }
.cells .big { width: 32px; }
.edit .body { padding-left: 11px; }
.edit .stack { width: 92px; }
.c3 { width: 62px; }
.c4 { width: 46px; }
.fold { align-self: flex-end; margin: 0 10px 3px auto; }
.fbar { display: flex; flex: none; height: 52px; padding: 11px 5px 10px; background: linear-gradient(#cdcdcd, #e6e6e6 7px); }
.namebox { display: flex; align-items: center; justify-content: flex-end; width: 102px; padding-right: 6px; border: 1px solid #c6c6c6; background: #fff; }
.dots { width: 30px; margin: 6px 0; background: radial-gradient(circle, #aaa 1px, transparent 2px) center / 30px 5px repeat-y; }
.fxbox { display: flex; align-items: center; justify-content: space-around; width: 110px; padding: 0 8px; border: 1px solid #c6c6c6; background: #fff; font-size: 18px; }
.fxbox small { font-size: 12px; }
.finput { display: flex; align-items: center; flex: 1; margin-left: 3px; padding: 0 5px 0 13px; border: 1px solid #c6c6c6; background: #fff; }
.finput input { flex: 1; font-size: 15px; font-feature-settings: normal; }

.sheet { display: flex; flex: 1; min-height: 0; background: #e6e6e6; }
.cellsarea { position: relative; flex: 1; min-width: 0; overflow: hidden; border-right: 1px solid #999; }
table { width: 100%; table-layout: fixed; border-collapse: separate; border-spacing: 0; font-size: 11px; line-height: 13px; color: #000; }
.w-h { width: 23px; } .w-a { width: 52px; } .w-b { width: 283px; } .w-c { width: 187px; } .w-d { width: 224px; } .w-e { width: 437px; } .w-j { width: 351px; } .w-k { width: 68px; } .w-l { width: 52px; }
td { padding: 1px 1px 0; background: #fff; border-right: 1px solid #000; border-bottom: 1px solid #000; vertical-align: top; white-space: nowrap; overflow: hidden; }
th { padding: 0; font-weight: 400; font-family: "Liberation Sans", sans-serif; line-height: 12px; background: #e6e6e6; border-bottom: 1px solid #ababab; border-right: 1px solid #0000c8; vertical-align: bottom; text-align: center; }
td:last-child { border-right: 0; }
.letters th { height: 14px; font-size: 12px; border-right-color: #bbb; border-bottom-color: #888; line-height: 13px; }
.letters svg { margin: 0 2px 2px auto; }
.r13 > * { height: 13px; }
.r14 > * { height: 14px; }
.r26 > * { height: 26px; }
.r34 > * { height: 34px; }
.r39 > * { height: 39px; }
.title td { border-top: 1px solid #0000c8; border-right-color: #d4d4d4; vertical-align: bottom; }
.green td { padding: 0 1px; background: #cfc; text-align: center; vertical-align: middle; line-height: 12px; }
.green.sub td { text-align: left; border-bottom-color: #888; }
.blank td { border-color: #d4d4d4; padding: 0; }
.last td { border-bottom: 3px solid #0000c8; }
td.void { background: #a0a0a0; border: 0; }
.mark { position: absolute; left: 1111px; top: 55px; font-size: 231px; line-height: 231px; white-space: nowrap; color: rgba(0, 0, 0, .41); font-feature-settings: normal; pointer-events: none; }
.vscroll { display: flex; flex-direction: column; width: 21px; padding: 2px 3px 1px 4px; }
.sb { display: grid; place-items: center; flex: none; width: 14px; height: 14px; background: #fff; border: 1px solid #ababab; color: #777; }
.track { flex: 1; background: #dadada; display: flex; }
.vscroll .track { flex-direction: column; justify-content: flex-end; padding-bottom: 1px; }
.track i { background: #fff; border: 1px solid #ababab; }
.vscroll i { height: 10%; }
.tabs { display: flex; flex: none; height: 28px; padding-right: 22px; background: #e6e6e6; border-top: 1px solid #999; border-bottom: 1px solid #c6c6c6; font-size: 13px; }
.arrows { display: flex; align-items: center; gap: 21px; width: 100px; padding-left: 24px; border-right: 1px solid #ababab; margin: 4px 0; }
.tabs > button { padding: 0 12px; margin: 3px 0; border-right: 1px solid #ababab; }
.tabs > .cur { margin: 0 0 3px; background: #fff; color: #217346; font-weight: 500; border-bottom: 3px solid #217346; }
.tabs > .add { border: 0; width: 84px; }
.tabs .dots { margin: 6px 0 6px auto; }
.hscroll { display: flex; align-items: center; width: 729px; }
.hscroll .track { height: 15px; }
.hscroll i { width: 66%; }
.status { display: flex; flex: none; align-items: center; height: 22px; padding: 0 8px; background: #f3f2f1; font-size: 13px; }
.ready { flex: 1; font-size: 12px; }
.view { display: grid; place-items: center; width: 38px; height: 22px; }
.view svg { fill: none; stroke: #666; }
.pm { font-size: 14px; width: 12px; text-align: center; }
.status input { appearance: none; width: 100px; height: 22px; background: linear-gradient(#999, #999) center / 100% 1px no-repeat; }
.status input::-webkit-slider-thumb { appearance: none; width: 5px; height: 12px; background: #666; }
.pct { width: 36px; text-align: right; }
```
